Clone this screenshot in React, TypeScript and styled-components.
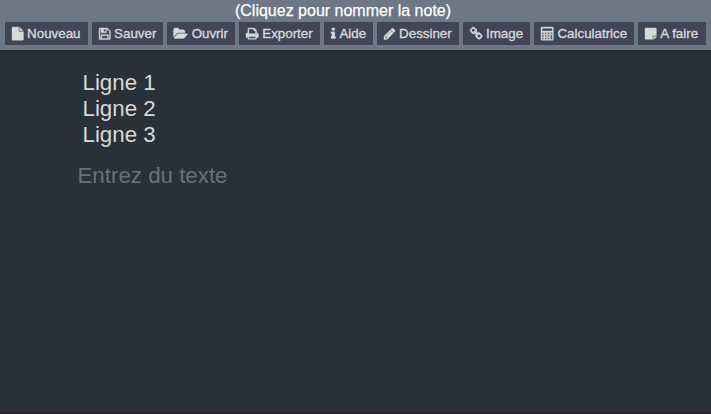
import React from 'react';
import styled, { createGlobalStyle } from 'styled-components';

const GlobalStyle = createGlobalStyle`
  * { box-sizing: border-box; }
  html, body { margin: 0; overflow: hidden; background: #2a3037; }
  body { font-family: 'Liberation Sans', Arial, sans-serif; }
`;

const Page = styled.div`
  display: flex;
  flex-direction: column;
  height: 100vh;
  background: #2a3037;
  border-bottom: 2px solid #2b2631;
`;

const Header = styled.header`
  flex: none;
  height: 50px;
  padding: 1px 5px 0;
  background: #6d7785;
  box-shadow: 0 2px 8px rgba(0, 0, 0, 0.15);
`;

const Title = styled.div`
  height: 21px;
  padding-right: 25px;
  font-size: 16px;
  line-height: 20px;
  text-align: center;
  color: #ffffff;
  -webkit-text-stroke: 0.25px currentColor;
`;

const Toolbar = styled.nav`
  display: flex;
  gap: 4px;
`;

const ToolButton = styled.button<{ $width: number }>`
  display: flex;
  align-items: center;
  flex: none;
  gap: 3.7px;
  width: ${({ $width }) => $width}px;
  height: 23px;
  padding: 0 0 0 7px;
  border: 0;
  background: #424458;
  color: #d5dadb;
  font: 13.333px/23px 'Liberation Sans', Arial, sans-serif;
  white-space: nowrap;
  -webkit-text-stroke: 0.35px currentColor;
`;

const Glyph = styled.svg`
  flex: none;
  height: 13.333px;
  overflow: visible;
  fill: currentColor;
  stroke: currentColor;
  stroke-width: 50;
`;

const Editor = styled.main`
  padding: 20px 0 0 77.5px;
  font-size: 22.3px;
  line-height: 26px;
`;

const Lines = styled.div`
  padding-left: 5px;
  color: #d6d8d9;
`;

const Placeholder = styled.div`
  margin-top: 15px;
  color: #6c6f74;
`;

type Tool = { label: string; width: number; left: number; span: number; path: string };

const calculatorKeys = [0, 1, 2]
  .flatMap((row) => [0, 1, 2, 3].map((col) => ({ row, col })))
  .filter(({ row, col }) => !(row === 1 && col === 3) && !(row === 2 && col === 3))
  .map(({ row, col }) => `M${210 + col * 384} ${740 + row * 340}v220h220v-220z`)
  .join('');

const tools: Tool[] = [
  { label: 'Nouveau', width: 83, left: 128, span: 1536, path: 'M1152 512v-472q22 14 36 28l408 408q14 14 28 36h-472zm-128 32q0 40 28 68t68 28h544v1056q0 40-28 68t-68 28h-1344q-40 0-68-28t-28-68v-1600q0-40 28-68t68-28h800v544z' },
  { label: 'Sauver', width: 71, left: 128, span: 1536, path: 'M512 1536h768v-384h-768v384zm896 0h128v-896q0-14-10-38.5t-20-34.5l-281-281q-10-10-34-20t-39-10v416q0 40-28 68t-68 28h-576q-40 0-68-28t-28-68v-416h-128v1280h128v-416q0-40 28-68t68-28h832q40 0 68 28t28 68v416zm-384-928v-320q0-13-9.5-22.5t-22.5-9.5h-192q-13 0-22.5 9.5t-9.5 22.5v320q0 13 9.5 22.5t22.5 9.5h192q13 0 22.5-9.5t9.5-22.5zm640 32v928q0 40-28 68t-68 28h-1344q-40 0-68-28t-28-68v-1344q0-40 28-68t68-28h928q40 0 88 20t76 48l280 280q28 28 48 76t20 88z' },
  { label: 'Ouvrir', width: 68, left: 0, span: 1879, path: 'M1815 952q0 31-31 66l-336 396q-43 51-120.5 86.5t-143.5 35.5h-1088q-34 0-60.5-13t-26.5-43q0-31 31-66l336-396q43-51 120.5-86.5t143.5-35.5h1088q34 0 60.5 13t26.5 43zm-343-344v160h-832q-94 0-197 47.5t-164 119.5l-337 396-5 6q0-4-.5-12.5t-.5-12.5v-960q0-92 66-158t158-66h320q92 0 158 66t66 158v32h544q92 0 158 66t66 158z' },
  { label: 'Exporter', width: 81, left: 64, span: 1690, path: 'M448 1536h896v-256h-896v256zm0-640h896v-384h-160q-40 0-68-28t-28-68v-160h-640v640zm1152 64q0-26-19-45t-45-19-45 19-19 45 19 45 45 19 45-19 19-45zm128 0v416q0 13-9.5 22.5t-22.5 9.5h-224v160q0 40-28 68t-68 28h-960q-40 0-68-28t-28-68v-160h-224q-13 0-22.5-9.5t-9.5-22.5v-416q0-79 56.5-135.5t135.5-56.5h64v-544q0-40 28-68t68-28h672q40 0 88 20t76 48l152 152q28 28 48 76t20 88v256h64q79 0 135.5 56.5t56.5 135.5z' },
  { label: 'Aide', width: 49, left: 576, span: 640, path: 'M1216 1344v128q0 26-19 45t-45 19h-512q-26 0-45-19t-19-45v-128q0-26 19-45t45-19h64v-384h-64q-26 0-45-19t-19-45v-128q0-26 19-45t45-19h384q26 0 45 19t19 45v576h64q26 0 45 19t19 45zm-128-1152v192q0 26-19 45t-45 19h-256q-26 0-45-19t-19-45v-192q0-26 19-45t45-19h256q26 0 45 19t19 45z' },
  { label: 'Dessiner', width: 82, left: 128, span: 1536, path: 'M491 1536l91-91-235-235-91 91v107h128v128h107zm523-928q0-22-22-22-10 0-17 7l-542 542q-7 7-7 17 0 22 22 22 10 0 17-7l542-542q7-7 7-17zm-54-192l416 416-832 832h-416v-416zm683 96q0 53-37 90l-166 166-416-416 166-165q36-38 90-38 53 0 91 38l235 234q37 39 37 91z' },
  { label: 'Image', width: 67, left: 64, span: 1664, path: 'M1520 1216q0-40-28-68l-208-208q-28-28-68-28-42 0-72 32 3 3 19 18.5t21.5 21.5 15 19 13 25.5 3.5 27.5q0 40-28 68t-68 28q-15 0-27.5-3.5t-25.5-13-19-15-21.5-21.5-18.5-19q-33 31-33 73 0 40 28 68l206 207q27 27 68 27 40 0 68-26l147-146q28-28 28-67zm-703-705q0-40-28-68l-206-207q-28-28-68-28-39 0-68 27l-147 146q-28 28-28 67 0 40 28 68l208 208q27 27 68 27 42 0 72-31-3-3-19-18.5t-21.5-21.5-15-19-13-25.5-3.5-27.5q0-40 28-68t68-28q15 0 27.5 3.5t25.5 13 19 15 21.5 21.5 18.5 19q33-31 33-73zm895 705q0 120-85 203l-147 146q-83 83-203 83-121 0-204-85l-206-207q-83-83-83-203 0-123 88-209l-88-88q-86 88-208 88-120 0-204-84l-208-208q-84-84-84-204t85-203l147-146q83-83 203-83 121 0 204 85l206 207q83 83 83 203 0 123-88 209l88 88q86-88 208-88 120 0 204 84l208 208q84 84 84 204z' },
  { label: 'Calculatrice', width: 100, left: 64, span: 1720, path: `M160 0h1472q96 0 96 96v1600q0 96-96 96h-1472q-96 0-96-96v-1600q0-96 96-96zM210 170v370h1372v-370z${calculatorKeys}M1362 1080v560h220v-560z` },
  { label: 'A faire', width: 68, left: 128, span: 1560, path: 'M1152 1248v416h-928q-40 0-68-28t-28-68v-1344q0-40 28-68t68-28h1344q40 0 68 28t28 68v928h-416q-40 0-68 28t-28 68zm128 32h381q-15 82-65 132l-184 184q-50 50-132 65v-381z' },
];

export default function App() {
  return (
    <Page>
      <GlobalStyle />
      <Header>
        <Title>(Cliquez pour nommer la note)</Title>
        <Toolbar>
          {tools.map(({ label, width, left, span, path }) => (
            <ToolButton key={label} $width={width}>
              <Glyph viewBox={`${left} 0 ${span} 1792`} width={(span / 1792) * 13.333} aria-hidden="true">
                <path fillRule="evenodd" d={path} />
              </Glyph>
              <span>{label}</span>
            </ToolButton>
          ))}
        </Toolbar>
      </Header>
      <Editor>
        <Lines>
          <div>Ligne 1</div>
          <div>Ligne 2</div>
          <div>Ligne 3</div>
        </Lines>
        <Placeholder>Entrez du texte</Placeholder>
      </Editor>
    </Page>
  );
}
